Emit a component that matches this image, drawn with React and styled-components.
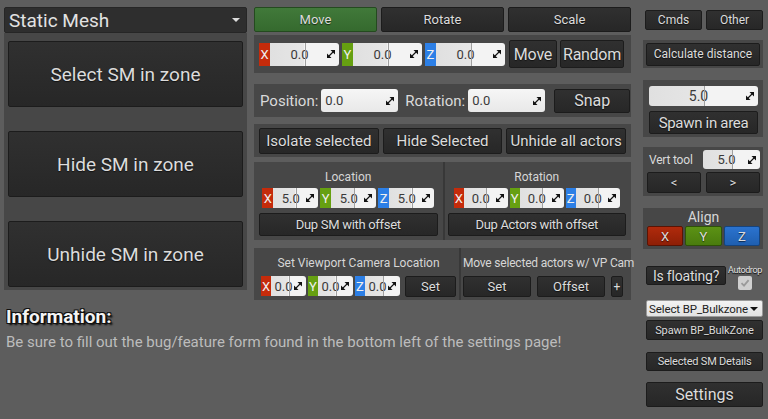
import styled, { createGlobalStyle } from "styled-components";

const GlobalStyle = createGlobalStyle`
  html, body {
    margin: 0;
    background: #5d5d5d;
    font-family: Roboto, "Liberation Sans", sans-serif;
  }
`;

const AXIS = { X: "#c52b0b", Y: "#66a011", Z: "#2c7fe6" };

const TONES = {
  dark: ["#303030", "#272727", "#1c1c1c"],
  green: ["#41793a", "#356a2e", "#244a1f"],
  red: ["#b02a0c", "#8e1f06", "#5a1404"],
  lime: ["#5c9215", "#4a7c0e", "#2f5208"],
  blue: ["#2b73cf", "#1f5fb0", "#16447e"],
};

const Page = styled.div`
  display: flex;
  gap: 12px;
  padding: 7px 4px 0 4px;
  height: 412px;
`;

const Main = styled.div`
  display: flex;
  flex-direction: column;
`;

const Top = styled.div`
  display: flex;
  gap: 7px;
  align-items: flex-start;
`;

const LeftCol = styled.div`
  width: 243px;
  display: flex;
  flex-direction: column;
`;

const MidCol = styled.div`
  width: 377px;
  display: flex;
  flex-direction: column;
`;

const RightCol = styled.div`
  width: 120px;
  display: flex;
  flex-direction: column;
`;

const Combo = styled.div`
  display: flex;
  align-items: center;
  justify-content: space-between;
  height: ${(p) => p.$h || 26}px;
  margin-top: ${(p) => p.$mt || 0}px;
  padding: 0 4px 0 4px;
  box-sizing: border-box;
  border-radius: 2px;
  background: ${(p) => (p.$light ? "linear-gradient(#f2f2f2, #e2e2e2)" : "#2e2e2e")};
  border: 1px solid ${(p) => (p.$light ? "#9a9a9a" : "#262626")};
  color: ${(p) => (p.$light ? "#222" : "#e2e2e2")};
  font-size: ${(p) => p.$fs || 19}px;
  letter-spacing: ${(p) => p.$ls || 0}px;
  white-space: nowrap;
  overflow: hidden;
`;

const Caret = styled.span`
  flex: none;
  width: 0;
  height: 0;
  border-left: ${(p) => p.$s || 4}px solid transparent;
  border-right: ${(p) => p.$s || 4}px solid transparent;
  border-top: ${(p) => p.$s || 4}px solid ${(p) => p.$c || "#ddd"};
  margin-right: 2px;
`;

const Panel = styled.div`
  background: #474747;
  margin-top: ${(p) => p.$mt || 0}px;
  height: ${(p) => (p.$h ? `${p.$h}px` : "auto")};
  padding: ${(p) => p.$pad || "0"};
  box-sizing: border-box;
  display: flex;
  flex-direction: ${(p) => p.$dir || "row"};
  align-items: ${(p) => p.$align || "center"};
  gap: ${(p) => p.$gap || 0}px;
`;

// $col: the button sits in a column and keeps its own height
const Button = styled.div`
  display: flex;
  align-items: center;
  justify-content: center;
  box-sizing: border-box;
  flex: ${(p) => (p.$w || p.$col ? "none" : 1)};
  width: ${(p) => (p.$w ? `${p.$w}px` : "auto")};
  height: ${(p) => p.$h || 24}px;
  margin-top: ${(p) => p.$mt || 0}px;
  border-radius: 2px;
  border: 1px solid ${(p) => TONES[p.$tone || "dark"][2]};
  background: linear-gradient(
    ${(p) => TONES[p.$tone || "dark"][0]},
    ${(p) => TONES[p.$tone || "dark"][1]}
  );
  color: #dcdcdc;
  font-size: ${(p) => p.$fs || 14}px;
  text-shadow: 0 1px 1px rgba(0, 0, 0, 0.6);
  white-space: nowrap;
  letter-spacing: ${(p) => p.$ls || 0}px;
`;

const Row = styled.div`
  display: flex;
  align-items: center;
  gap: ${(p) => p.$gap || 0}px;
  margin-top: ${(p) => p.$mt || 0}px;
  height: ${(p) => (p.$h ? `${p.$h}px` : "auto")};
  justify-content: ${(p) => p.$justify || "flex-start"};
`;

const Half = styled.div`
  flex: ${(p) => p.$flex || 1};
  height: 100%;
  box-sizing: border-box;
  padding: ${(p) => p.$pad || "0 5px"};
  display: flex;
  flex-direction: column;
  align-items: stretch;
  border-left: ${(p) => (p.$divided ? "2px solid #383838" : "none")};
`;

const Caption = styled.div`
  color: #d6d6d6;
  font-size: ${(p) => p.$fs || 12}px;
  letter-spacing: ${(p) => p.$ls || 0}px;
  text-align: center;
  white-space: nowrap;
  height: ${(p) => p.$h || 16}px;
  line-height: ${(p) => p.$h || 16}px;
  margin-top: ${(p) => p.$mt || 0}px;
`;

const Label = styled.span`
  color: #dadada;
  font-size: ${(p) => p.$fs || 15}px;
  letter-spacing: ${(p) => p.$ls || 0}px;
  white-space: nowrap;
`;

const AxisTag = styled.span`
  display: flex;
  align-items: center;
  justify-content: center;
  width: ${(p) => p.$w}px;
  height: 100%;
  background: ${(p) => AXIS[p.$axis]};
  color: #f0f0f0;
  font-size: ${(p) => p.$fs}px;
`;

const Field = styled.div`
  position: relative;
  display: flex;
  align-items: center;
  justify-content: ${(p) => (p.$left ? "flex-start" : "center")};
  box-sizing: border-box;
  width: ${(p) => p.$w}px;
  height: 100%;
  padding: ${(p) => (p.$left ? "0 4px" : "0 10px 0 0")};
  border-radius: ${(p) => (p.$tagged ? "0 3px 3px 0" : "3px")};
  background: ${(p) =>
    p.$left
      ? "linear-gradient(#f6f6f6, #e8e8e8)"
      : "linear-gradient(to right, #e0e0e0 0%, #e6e6e6 50%, #f3f3f3 50%, #f3f3f3 100%)"};
  color: #3a3a3a;
  font-size: ${(p) => p.$fs || 14}px;
  white-space: nowrap;
`;

const Divider = styled.span`
  position: absolute;
  top: 0;
  bottom: 0;
  left: 50%;
  width: 1px;
  background: #a0a0a0;
`;

const Spin = styled.svg`
  position: absolute;
  right: 4px;
  top: 50%;
  margin-top: -4px;
`;

const AxisGroup = styled.div`
  display: flex;
  height: ${(p) => p.$h}px;
`;

const InfoBlock = styled.div`
  margin-top: 5px;
  padding-left: 2px;
`;

const InfoTitle = styled.div`
  color: #f4f4f4;
  font-weight: 700;
  font-size: 19px;
  text-shadow: 1px 1px 0 #111, -1px -1px 0 #111, 1px -1px 0 #111, -1px 1px 0 #111, 2px 2px 2px #000;
  height: 24px;
  line-height: 24px;
`;

const InfoText = styled.div`
  color: #bcbcbc;
  font-size: 15px;
  margin-top: 4px;
  white-space: nowrap;
`;

const Small = styled.span`
  color: #e4e4e4;
  font-size: 9px;
  letter-spacing: -0.4px;
  text-shadow: 0 1px 1px #000;
`;

const Check = styled.div`
  width: 14px;
  height: 14px;
  border-radius: 2px;
  background: #cfcfcf;
  display: flex;
  align-items: center;
  justify-content: center;
  margin-top: 1px;
`;

const FloatStack = styled.div`
  display: flex;
  flex-direction: column;
  align-items: center;
  margin-left: 2px;
`;

const SpinIcon = () => (
  <Spin width="8" height="8" viewBox="0 0 8 8">
    <polygon points="8,0 8,4.5 3.5,0" fill="#111" />
    <polygon points="0,8 0,3.5 4.5,8" fill="#111" />
    <line x1="2" y1="6" x2="6" y2="2" stroke="#111" strokeWidth="1.1" />
  </Spin>
);

const NumField = ({ value, w, fs, tagged, left }) => (
  <Field $w={w} $fs={fs} $tagged={tagged} $left={left}>
    {value}
    {!left && <Divider />}
    <SpinIcon />
  </Field>
);

const Vector = ({ value, tagW, fieldW, h, fs, gap }) => (
  <Row $gap={gap}>
    {["X", "Y", "Z"].map((a) => (
      <AxisGroup key={a} $h={h}>
        <AxisTag $axis={a} $w={tagW} $fs={fs}>
          {a}
        </AxisTag>
        <NumField value={value} w={fieldW} fs={fs} tagged />
      </AxisGroup>
    ))}
  </Row>
);

export default function App() {
  return (
    <>
      <GlobalStyle />
      <Page>
        <Main>
          <Top>
            <LeftCol>
              <Combo>
                Static Mesh
                <Caret />
              </Combo>
              <Panel $dir="column" $align="stretch" $gap={24} $pad="8px 4px 3px 4px">
                <Button $col $h={66} $fs={19}>Select SM in zone</Button>
                <Button $col $h={66} $fs={19}>Hide SM in zone</Button>
                <Button $col $h={66} $fs={19}>Unhide SM in zone</Button>
              </Panel>
            </LeftCol>

            <MidCol>
              <Row $gap={4} $h={25}>
                <Button $tone="green" $h={25} $fs={13}>Move</Button>
                <Button $h={25} $fs={13}>Rotate</Button>
                <Button $h={25} $fs={13}>Scale</Button>
              </Row>

              <Panel $mt={3} $h={38} $pad="0 5px" $gap={3}>
                <Vector value="0.0" tagW={11} fieldW={69} h={23} fs={13} gap={3} />
                <Button $w={48} $h={28} $fs={16} $ls={-0.2} style={{ marginLeft: 1 }}>Move</Button>
                <Button $w={64} $h={28} $fs={16} $ls={-0.3}>Random</Button>
              </Panel>

              <Panel $mt={11} $h={33} $pad="0 5px 0 6px">
                <Label>Position:</Label>
                <Row $h={23} style={{ marginLeft: 3 }}>
                  <NumField value="0.0" w={77} fs={13} left />
                </Row>
                <Label style={{ marginLeft: 7 }}>Rotation:</Label>
                <Row $h={23} style={{ marginLeft: 3 }}>
                  <NumField value="0.0" w={77} fs={13} left />
                </Row>
                <Button $w={76} $h={24} $fs={16} style={{ marginLeft: 9 }}>Snap</Button>
              </Panel>

              <Panel $mt={7} $h={33} $pad="0 5px" $gap={4}>
                <Button $h={26} $fs={15}>Isolate selected</Button>
                <Button $h={26} $fs={15}>Hide Selected</Button>
                <Button $h={26} $fs={15}>Unhide all actors</Button>
              </Panel>

              <Panel $mt={5} $h={78} $align="stretch">
                <Half $pad="6px 5px 0 5px">
                  <Caption $h={18}>Location</Caption>
                  <Row $mt={2} $justify="center" $h={20}>
                    <Vector value="5.0" tagW={11} fieldW={45} h={20} fs={13} gap={2} />
                  </Row>
                  <Button $col $h={23} $mt={5} $fs={13} $ls={-0.3}>Dup SM with offset</Button>
                </Half>
                <Half $divided $pad="6px 5px 0 3px">
                  <Caption $h={18}>Rotation</Caption>
                  <Row $mt={2} $justify="center" $h={20}>
                    <Vector value="0.0" tagW={10} fieldW={44} h={20} fs={13} gap={2} />
                  </Row>
                  <Button $col $h={23} $mt={5} $fs={13} $ls={-0.3}>Dup Actors with offset</Button>
                </Half>
              </Panel>

              <Panel $mt={8} $h={52} $align="stretch">
                <Half $flex={206} $pad="7px 3px 0 7px">
                  <Caption>Set Viewport Camera Location</Caption>
                  <Row $mt={5} $gap={5} $h={20}>
                    <Vector value="0.0" tagW={10} fieldW={35} h={20} fs={13} gap={2} />
                    <Button $w={51} $h={21} $fs={13}>Set</Button>
                  </Row>
                </Half>
                <Half $flex={169} $divided $pad="7px 3px 0 2px">
                  <Caption $ls={-0.2}>Move selected actors w/ VP Cam</Caption>
                  <Row $mt={5} $gap={6} $h={21}>
                    <Button $w={68} $h={21} $fs={13}>Set</Button>
                    <Button $w={68} $h={21} $fs={13}>Offset</Button>
                    <Button $w={12} $h={21} $fs={12}>+</Button>
                  </Row>
                </Half>
              </Panel>
            </MidCol>
          </Top>

          <InfoBlock>
            <InfoTitle>Information:</InfoTitle>
            <InfoText>
              Be sure to fill out the bug/feature form found in the bottom left of the settings page!
            </InfoText>
          </InfoBlock>
        </Main>

        <RightCol>
          <Row $gap={4} $h={20} $mt={3} style={{ paddingLeft: 2 }}>
            <Button $h={20} $fs={12}>Cmds</Button>
            <Button $h={20} $fs={12}>Other</Button>
          </Row>

          <Panel $mt={10} $h={28} $pad="0 3px 0 3px">
            <Button $h={23} $fs={12}>Calculate distance</Button>
          </Panel>

          <Panel $mt={12} $dir="column" $align="stretch" $pad="6px 5px 3px 6px">
            <Row $h={20}>
              <NumField value="5.0" w={109} fs={14} />
            </Row>
            <Button $col $h={23} $mt={5} $fs={15} $ls={-0.3}>Spawn in area</Button>
          </Panel>

          <Panel $mt={10} $h={49} $dir="column" $align="stretch" $pad="3px 3px 3px 4px">
            <Row $h={19} $justify="space-between">
              <Label $fs={12} $ls={-0.2} style={{ marginLeft: 2 }}>Vert tool</Label>
              <Row $h={19}>
                <NumField value="5.0" w={57} fs={13} />
              </Row>
            </Row>
            <Row $gap={5} $mt={3} $h={21}>
              <Button $h={21} $fs={13}>&lt;</Button>
              <Button $h={21} $fs={13}>&gt;</Button>
            </Row>
          </Panel>

          <Panel $mt={12} $h={41} $dir="column" $align="stretch" $pad="0 3px 2px 4px">
            <Caption $h={18} $fs={14}>Align</Caption>
            <Row $gap={2} $h={20}>
              <Button $tone="red" $h={20} $fs={13}>X</Button>
              <Button $tone="lime" $h={20} $fs={13}>Y</Button>
              <Button $tone="blue" $h={20} $fs={13}>Z</Button>
            </Row>
          </Panel>

          <Row $mt={16} style={{ alignItems: "flex-start", paddingLeft: 3 }}>
            <Button $w={80} $h={19} $fs={14} $ls={-0.2} style={{ marginTop: 1 }}>Is floating?</Button>
            <FloatStack>
              <Small>Autodrop</Small>
              <Check>
                <svg width="10" height="10" viewBox="0 0 10 10">
                  <polyline points="1.5,5.2 4,7.6 8.6,2.2" fill="none" stroke="#9a9a9a" strokeWidth="1.8" />
                </svg>
              </Check>
            </FloatStack>
          </Row>

          <Combo $light $h={17} $fs={11.5} $ls={-0.1} $mt={10} style={{ marginLeft: 3, padding: "0 2px" }}>
            Select BP_Bulkzone
            <Caret $c="#111" $s={4} />
          </Combo>
          <Row style={{ paddingLeft: 3 }} $mt={3}>
            <Button $h={20} $fs={11} $ls={-0.1}>Spawn BP_BulkZone</Button>
          </Row>
          <Row style={{ paddingLeft: 3 }} $mt={12}>
            <Button $h={19} $fs={11} $ls={-0.2}>Selected SM Details</Button>
          </Row>
          <Row style={{ paddingLeft: 3 }} $mt={11}>
            <Button $h={25} $fs={16}>Settings</Button>
          </Row>
        </RightCol>
      </Page>
    </>
  );
}
